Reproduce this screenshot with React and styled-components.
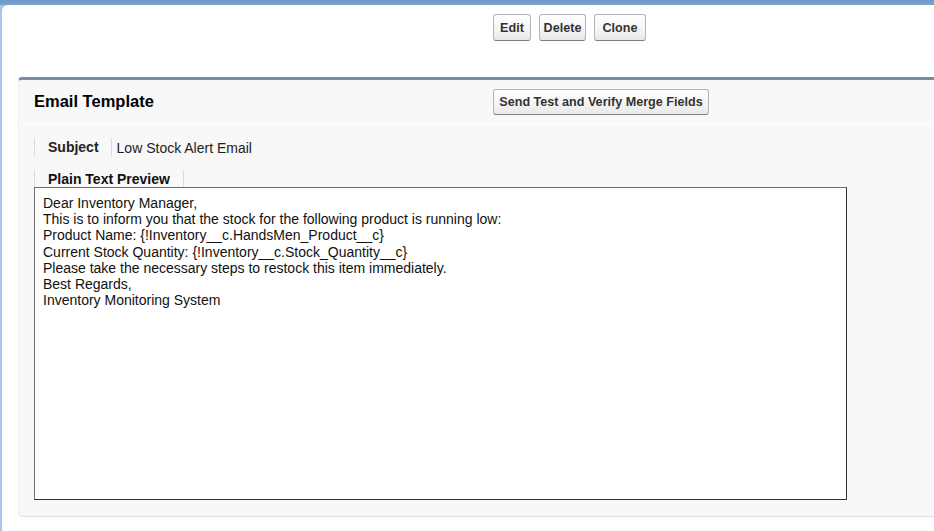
import React from "react";
import styled, { createGlobalStyle } from "styled-components";

const Global = createGlobalStyle`
  html, body { margin: 0; padding: 0; }
  body {
    font-family: "Liberation Sans", Arial, sans-serif;
    background: linear-gradient(to bottom, #6f99c9 0, #7aa2cf 5px, #aac5e8 5px);
    height: 531px;
    overflow: hidden;
  }
`;

const Page = styled.div`
  margin: 5px 0 0 2px;
  height: 526px;
  background: #fff;
  border-top-left-radius: 6px;
  overflow: hidden;
  box-sizing: border-box;
  padding-top: 9px;
`;

const ButtonRow = styled.div`
  display: flex;
  gap: 8px;
  padding-left: 491px;
`;

const Button = styled.button`
  font-family: "Liberation Sans", Arial, sans-serif;
  font-weight: bold;
  font-size: 12.6px;
  color: #333;
  width: ${(p) => p.$w}px;
  height: ${(p) => p.$h || 27}px;
  padding: 0;
  text-align: center;
  background: linear-gradient(to bottom, #ffffff 0%, #f4f4f4 60%, #e8e8e8 100%);
  border: 1px solid #b5b5b5;
  border-bottom-color: #7f7f7f;
  border-radius: 3px;
  cursor: pointer;
`;

const Panel = styled.div`
  margin: 36px -12px 0 16px;
  background: #f8f8f8;
  border-top: 3px solid #7b8aa8;
  border-bottom: 1px solid #e2e2e2;
  border-left: 1px solid #ececec;
  border-radius: 4px;
  height: 440px;
  box-sizing: border-box;
`;

const PanelHeader = styled.div`
  display: flex;
  align-items: center;
  height: 43px;
  border-bottom: 1px solid #ffffff;
  padding-left: 15px;
`;

const Title = styled.h2`
  margin: 0;
  font-size: 16.5px;
  font-weight: bold;
  color: #000;
  width: 459px;
`;

const PanelBody = styled.div`
  padding: 14px 0 0 15px;
`;

const FieldRow = styled.div`
  display: flex;
  align-items: center;
  height: 19px;
  border-left: 1px solid #dcdcdc;
`;

const Label = styled.span`
  font-size: 14px;
  font-weight: bold;
  color: #222;
  padding: 0 12px 0 13px;
  border-right: 1px solid #dcdcdc;
  line-height: 19px;
`;

const Value = styled.span`
  font-size: 14px;
  color: #222;
  padding-left: 5px;
`;

const Tab = styled.div`
  display: flex;
  align-items: center;
  width: fit-content;
  margin-top: 13px;
  height: 17px;
  padding: 0 13px 0 13px;
  border-left: 1px solid #dcdcdc;
  border-right: 1px solid #dcdcdc;
  font-size: 14px;
  font-weight: bold;
  color: #111;
`;

const Preview = styled.div`
  width: 813px;
  height: 313px;
  box-sizing: border-box;
  background: #fff;
  border: 1px solid #333;
  border-top-color: #6f6f6f;
  border-left-color: #6f6f6f;
  padding: 7px 8px;
  font-size: 14px;
  line-height: 16.2px;
  color: #111;
  white-space: pre-line;
`;

const lines = [
  "Dear Inventory Manager,",
  "This is to inform you that the stock for the following product is running low:",
  "Product Name: {!Inventory__c.HandsMen_Product__c}",
  "Current Stock Quantity: {!Inventory__c.Stock_Quantity__c}",
  "Please take the necessary steps to restock this item immediately.",
  "Best Regards,",
  "Inventory Monitoring System",
];

export default function App() {
  return (
    <>
      <Global />
      <Page>
        <ButtonRow>
          <Button $w={38}>Edit</Button>
          <Button $w={47}>Delete</Button>
          <Button $w={52}>Clone</Button>
        </ButtonRow>
        <Panel>
          <PanelHeader>
            <Title>Email Template</Title>
            <Button $w={216} $h={26}>Send Test and Verify Merge Fields</Button>
          </PanelHeader>
          <PanelBody>
            <FieldRow>
              <Label>Subject</Label>
              <Value>Low Stock Alert Email</Value>
            </FieldRow>
            <Tab>Plain Text Preview</Tab>
            <Preview>{lines.join("\n")}</Preview>
          </PanelBody>
        </Panel>
      </Page>
    </>
  );
}
